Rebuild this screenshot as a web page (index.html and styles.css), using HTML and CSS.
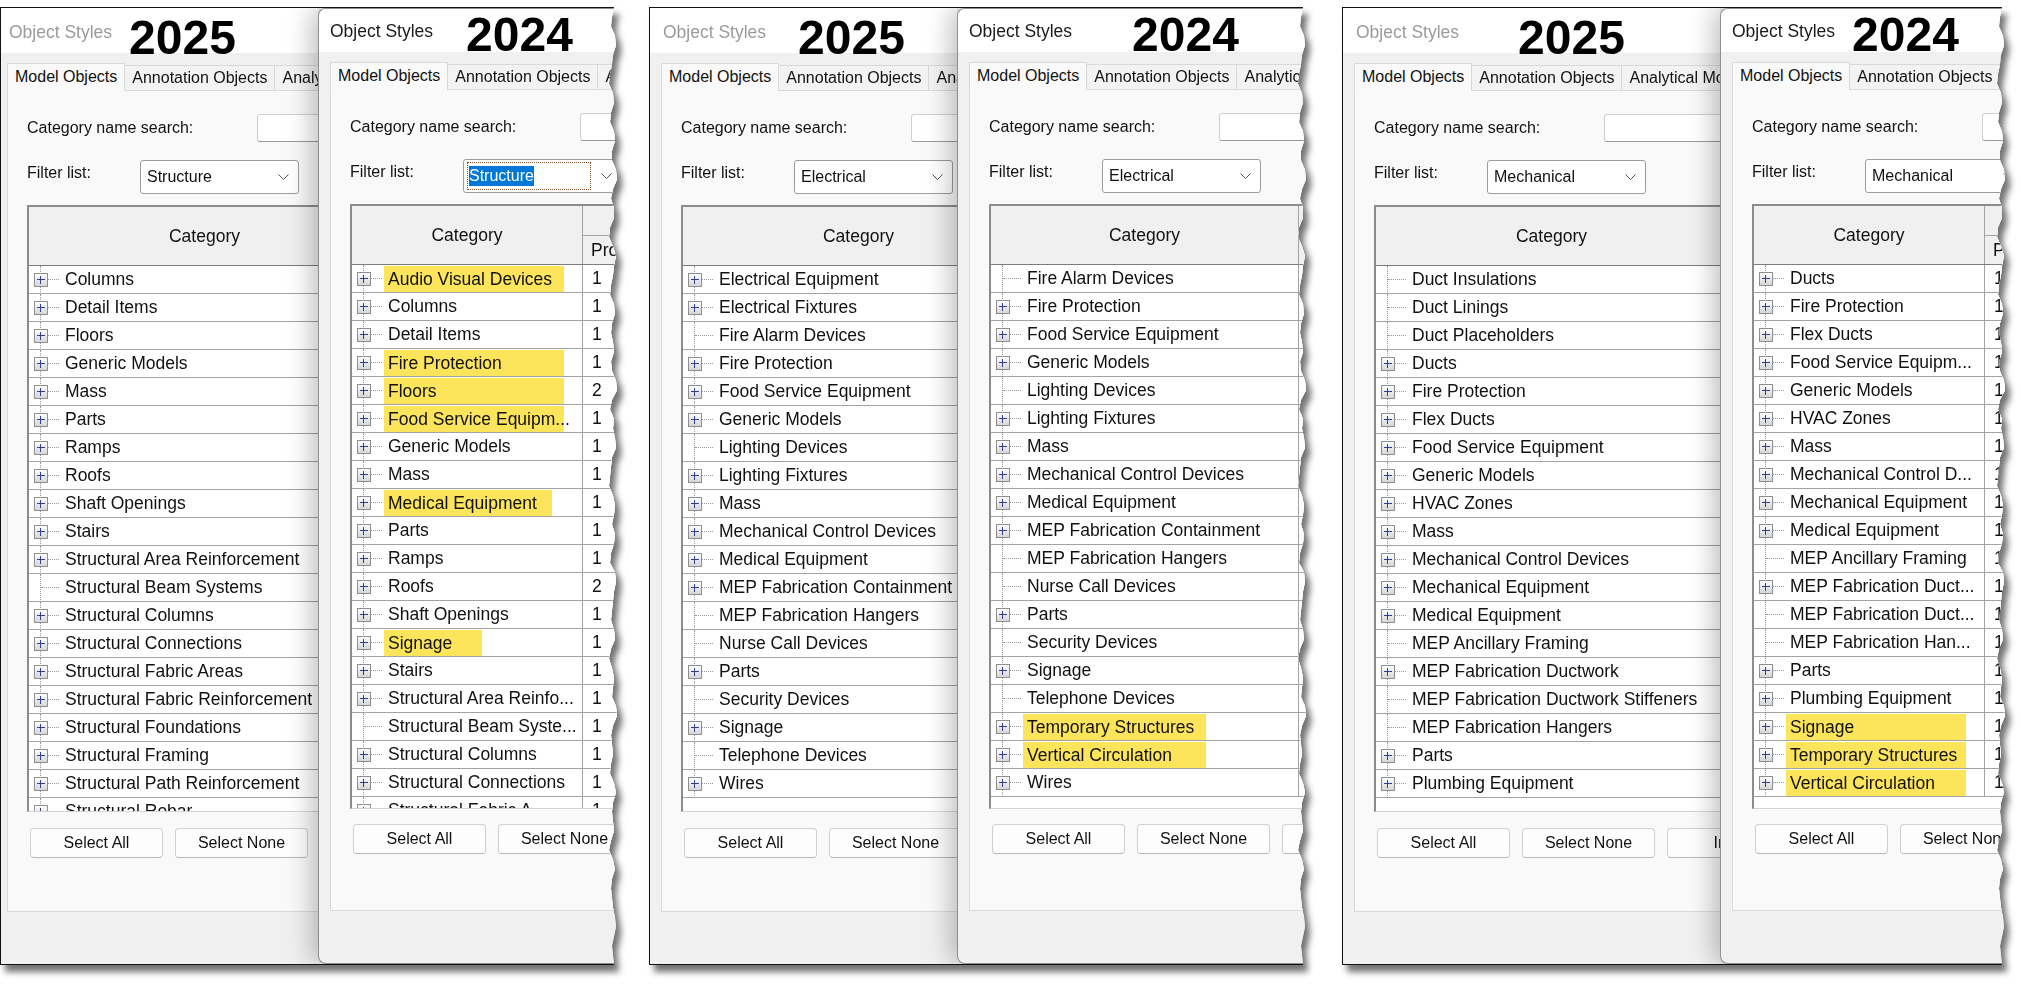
FILE: index.html
```html
<!DOCTYPE html>
<html lang="en">
<head>
    <meta charset="UTF-8">
    <title>Object Styles 2025 vs 2024</title>
    <link rel="stylesheet" href="styles.css">
</head>
<body>
<div class="sheet">

    <!-- Structure -->
    <div class="wrap g1">
        <div class="shot">
            <div class="dlg old">
                <div class="titlebar"><span class="ttl">Object Styles</span><span class="year">2025</span></div>
                <div class="body">
                    <div class="tabs">
                        <div class="tab on">Model Objects</div>
                        <div class="tab">Annotation Objects</div>
                        <div class="tab">Analytical Model Objects</div>
                    </div>
                    <div class="panel">
                        <div class="field"><span class="lbl lbl-search">Category name search:</span><div class="input"></div></div>
                        <div class="field filter-row"><span class="lbl lbl-filter">Filter list:</span>
                            <div class="select"><span>Structure</span><svg class="chev" width="11" height="7" viewBox="0 0 11 7"><polyline points="0.5,0.5 5.5,5.5 10.5,0.5" fill="none" stroke="#555" stroke-width="1"/></svg></div>
                        </div>
                        <div class="grid full">
                            <div class="thead"><div class="th-cat">Category</div><div class="th-rest"><div class="th-top"></div><div class="th-sub">Projection</div></div></div>
                            <div class="row"><div class="cat"><span class="tree"><i class="plus"></i></span><span class="name">Columns</span></div></div>
                            <div class="row"><div class="cat"><span class="tree"><i class="plus"></i></span><span class="name">Detail Items</span></div></div>
                            <div class="row"><div class="cat"><span class="tree"><i class="plus"></i></span><span class="name">Floors</span></div></div>
                            <div class="row"><div class="cat"><span class="tree"><i class="plus"></i></span><span class="name">Generic Models</span></div></div>
                            <div class="row"><div class="cat"><span class="tree"><i class="plus"></i></span><span class="name">Mass</span></div></div>
                            <div class="row"><div class="cat"><span class="tree"><i class="plus"></i></span><span class="name">Parts</span></div></div>
                            <div class="row"><div class="cat"><span class="tree"><i class="plus"></i></span><span class="name">Ramps</span></div></div>
                            <div class="row"><div class="cat"><span class="tree"><i class="plus"></i></span><span class="name">Roofs</span></div></div>
                            <div class="row"><div class="cat"><span class="tree"><i class="plus"></i></span><span class="name">Shaft Openings</span></div></div>
                            <div class="row"><div class="cat"><span class="tree"><i class="plus"></i></span><span class="name">Stairs</span></div></div>
                            <div class="row"><div class="cat"><span class="tree"><i class="plus"></i></span><span class="name">Structural Area Reinforcement</span></div></div>
                            <div class="row"><div class="cat"><span class="tree leaf"></span><span class="name">Structural Beam Systems</span></div></div>
                            <div class="row"><div class="cat"><span class="tree"><i class="plus"></i></span><span class="name">Structural Columns</span></div></div>
                            <div class="row"><div class="cat"><span class="tree"><i class="plus"></i></span><span class="name">Structural Connections</span></div></div>
                            <div class="row"><div class="cat"><span class="tree"><i class="plus"></i></span><span class="name">Structural Fabric Areas</span></div></div>
                            <div class="row"><div class="cat"><span class="tree"><i class="plus"></i></span><span class="name">Structural Fabric Reinforcement</span></div></div>
                            <div class="row"><div class="cat"><span class="tree"><i class="plus"></i></span><span class="name">Structural Foundations</span></div></div>
                            <div class="row"><div class="cat"><span class="tree"><i class="plus"></i></span><span class="name">Structural Framing</span></div></div>
                            <div class="row"><div class="cat"><span class="tree"><i class="plus"></i></span><span class="name">Structural Path Reinforcement</span></div></div>
                            <div class="row"><div class="cat"><span class="tree"><i class="plus"></i></span><span class="name">Structural Rebar</span></div></div>
                        </div>
                        <div class="buttons"><button class="btn">Select All</button><button class="btn">Select None</button><button class="btn">Invert</button></div>
                    </div>
                </div>
            </div>

            <div class="dlg new">
                <div class="titlebar"><span class="ttl">Object Styles</span><span class="year">2024</span></div>
                <div class="body">
                    <div class="tabs">
                        <div class="tab on">Model Objects</div>
                        <div class="tab">Annotation Objects</div>
                        <div class="tab">Analytical Model Objects</div>
                    </div>
                    <div class="panel">
                        <div class="field"><span class="lbl lbl-search">Category name search:</span><div class="input"></div></div>
                        <div class="field filter-row"><span class="lbl lbl-filter">Filter list:</span>
                            <div class="select focus"><span class="ring"><span class="sel-hl">Structure</span></span><svg class="chev" width="11" height="7" viewBox="0 0 11 7"><polyline points="0.5,0.5 5.5,5.5 10.5,0.5" fill="none" stroke="#555" stroke-width="1"/></svg></div>
                        </div>
                        <div class="grid narrow">
                            <div class="thead"><div class="th-cat">Category</div><div class="th-rest"><div class="th-top"></div><div class="th-sub">Projection</div></div></div>
                            <div class="row"><div class="cat"><span class="tree"><i class="plus"></i></span><span class="name hl hl-long">Audio Visual Devices</span></div><div class="val">1</div></div>
                            <div class="row"><div class="cat"><span class="tree"><i class="plus"></i></span><span class="name">Columns</span></div><div class="val">1</div></div>
                            <div class="row"><div class="cat"><span class="tree"><i class="plus"></i></span><span class="name">Detail Items</span></div><div class="val">1</div></div>
                            <div class="row"><div class="cat"><span class="tree"><i class="plus"></i></span><span class="name hl hl-long">Fire Protection</span></div><div class="val">1</div></div>
                            <div class="row"><div class="cat"><span class="tree"><i class="plus"></i></span><span class="name hl hl-long">Floors</span></div><div class="val">2</div></div>
                            <div class="row"><div class="cat"><span class="tree"><i class="plus"></i></span><span class="name hl hl-long">Food Service Equipm...</span></div><div class="val">1</div></div>
                            <div class="row"><div class="cat"><span class="tree"><i class="plus"></i></span><span class="name">Generic Models</span></div><div class="val">1</div></div>
                            <div class="row"><div class="cat"><span class="tree"><i class="plus"></i></span><span class="name">Mass</span></div><div class="val">1</div></div>
                            <div class="row"><div class="cat"><span class="tree"><i class="plus"></i></span><span class="name hl hl-mid">Medical Equipment</span></div><div class="val">1</div></div>
                            <div class="row"><div class="cat"><span class="tree"><i class="plus"></i></span><span class="name">Parts</span></div><div class="val">1</div></div>
                            <div class="row"><div class="cat"><span class="tree"><i class="plus"></i></span><span class="name">Ramps</span></div><div class="val">1</div></div>
                            <div class="row"><div class="cat"><span class="tree"><i class="plus"></i></span><span class="name">Roofs</span></div><div class="val">2</div></div>
                            <div class="row"><div class="cat"><span class="tree"><i class="plus"></i></span><span class="name">Shaft Openings</span></div><div class="val">1</div></div>
                            <div class="row"><div class="cat"><span class="tree"><i class="plus"></i></span><span class="name hl hl-short">Signage</span></div><div class="val">1</div></div>
                            <div class="row"><div class="cat"><span class="tree"><i class="plus"></i></span><span class="name">Stairs</span></div><div class="val">1</div></div>
                            <div class="row"><div class="cat"><span class="tree"><i class="plus"></i></span><span class="name">Structural Area Reinfo...</span></div><div class="val">1</div></div>
                            <div class="row"><div class="cat"><span class="tree leaf"></span><span class="name">Structural Beam Syste...</span></div><div class="val">1</div></div>
                            <div class="row"><div class="cat"><span class="tree"><i class="plus"></i></span><span class="name">Structural Columns</span></div><div class="val">1</div></div>
                            <div class="row"><div class="cat"><span class="tree"><i class="plus"></i></span><span class="name">Structural Connections</span></div><div class="val">1</div></div>
                            <div class="row"><div class="cat"><span class="tree"><i class="plus"></i></span><span class="name">Structural Fabric A...</span></div><div class="val">1</div></div>
                        </div>
                        <div class="buttons"><button class="btn">Select All</button><button class="btn">Select None</button><button class="btn">Invert</button></div>
                    </div>
                </div>
            </div>
        </div>
    </div>

    <!-- Electrical -->
    <div class="wrap g2">
        <div class="shot">
            <div class="dlg old">
                <div class="titlebar"><span class="ttl">Object Styles</span><span class="year">2025</span></div>
                <div class="body">
                    <div class="tabs">
                        <div class="tab on">Model Objects</div>
                        <div class="tab">Annotation Objects</div>
                        <div class="tab">Analytical Model Objects</div>
                    </div>
                    <div class="panel">
                        <div class="field"><span class="lbl lbl-search">Category name search:</span><div class="input"></div></div>
                        <div class="field filter-row"><span class="lbl lbl-filter">Filter list:</span>
                            <div class="select"><span>Electrical</span><svg class="chev" width="11" height="7" viewBox="0 0 11 7"><polyline points="0.5,0.5 5.5,5.5 10.5,0.5" fill="none" stroke="#555" stroke-width="1"/></svg></div>
                        </div>
                        <div class="grid full">
                            <div class="thead"><div class="th-cat">Category</div><div class="th-rest"><div class="th-top"></div><div class="th-sub">Projection</div></div></div>
                            <div class="row"><div class="cat"><span class="tree"><i class="plus"></i></span><span class="name">Electrical Equipment</span></div></div>
                            <div class="row"><div class="cat"><span class="tree"><i class="plus"></i></span><span class="name">Electrical Fixtures</span></div></div>
                            <div class="row"><div class="cat"><span class="tree leaf"></span><span class="name">Fire Alarm Devices</span></div></div>
                            <div class="row"><div class="cat"><span class="tree"><i class="plus"></i></span><span class="name">Fire Protection</span></div></div>
                            <div class="row"><div class="cat"><span class="tree"><i class="plus"></i></span><span class="name">Food Service Equipment</span></div></div>
                            <div class="row"><div class="cat"><span class="tree"><i class="plus"></i></span><span class="name">Generic Models</span></div></div>
                            <div class="row"><div class="cat"><span class="tree leaf"></span><span class="name">Lighting Devices</span></div></div>
                            <div class="row"><div class="cat"><span class="tree"><i class="plus"></i></span><span class="name">Lighting Fixtures</span></div></div>
                            <div class="row"><div class="cat"><span class="tree"><i class="plus"></i></span><span class="name">Mass</span></div></div>
                            <div class="row"><div class="cat"><span class="tree"><i class="plus"></i></span><span class="name">Mechanical Control Devices</span></div></div>
                            <div class="row"><div class="cat"><span class="tree"><i class="plus"></i></span><span class="name">Medical Equipment</span></div></div>
                            <div class="row"><div class="cat"><span class="tree"><i class="plus"></i></span><span class="name">MEP Fabrication Containment</span></div></div>
                            <div class="row"><div class="cat"><span class="tree leaf"></span><span class="name">MEP Fabrication Hangers</span></div></div>
                            <div class="row"><div class="cat"><span class="tree leaf"></span><span class="name">Nurse Call Devices</span></div></div>
                            <div class="row"><div class="cat"><span class="tree"><i class="plus"></i></span><span class="name">Parts</span></div></div>
                            <div class="row"><div class="cat"><span class="tree leaf"></span><span class="name">Security Devices</span></div></div>
                            <div class="row"><div class="cat"><span class="tree"><i class="plus"></i></span><span class="name">Signage</span></div></div>
                            <div class="row"><div class="cat"><span class="tree leaf"></span><span class="name">Telephone Devices</span></div></div>
                            <div class="row"><div class="cat"><span class="tree"><i class="plus"></i></span><span class="name">Wires</span></div></div>
                        </div>
                        <div class="buttons"><button class="btn">Select All</button><button class="btn">Select None</button><button class="btn">Invert</button></div>
                    </div>
                </div>
            </div>

            <div class="dlg new">
                <div class="titlebar"><span class="ttl">Object Styles</span><span class="year">2024</span></div>
                <div class="body">
                    <div class="tabs">
                        <div class="tab on">Model Objects</div>
                        <div class="tab">Annotation Objects</div>
                        <div class="tab">Analytical Model Objects</div>
                    </div>
                    <div class="panel">
                        <div class="field"><span class="lbl lbl-search">Category name search:</span><div class="input"></div></div>
                        <div class="field filter-row"><span class="lbl lbl-filter">Filter list:</span>
                            <div class="select"><span>Electrical</span><svg class="chev" width="11" height="7" viewBox="0 0 11 7"><polyline points="0.5,0.5 5.5,5.5 10.5,0.5" fill="none" stroke="#555" stroke-width="1"/></svg></div>
                        </div>
                        <div class="grid wide">
                            <div class="thead"><div class="th-cat">Category</div><div class="th-rest"><div class="th-top"></div><div class="th-sub">Projection</div></div></div>
                            <div class="row"><div class="cat"><span class="tree leaf"></span><span class="name">Fire Alarm Devices</span></div><div class="val">1</div></div>
                            <div class="row"><div class="cat"><span class="tree"><i class="plus"></i></span><span class="name">Fire Protection</span></div><div class="val">1</div></div>
                            <div class="row"><div class="cat"><span class="tree"><i class="plus"></i></span><span class="name">Food Service Equipment</span></div><div class="val">1</div></div>
                            <div class="row"><div class="cat"><span class="tree"><i class="plus"></i></span><span class="name">Generic Models</span></div><div class="val">1</div></div>
                            <div class="row"><div class="cat"><span class="tree leaf"></span><span class="name">Lighting Devices</span></div><div class="val">1</div></div>
                            <div class="row"><div class="cat"><span class="tree"><i class="plus"></i></span><span class="name">Lighting Fixtures</span></div><div class="val">1</div></div>
                            <div class="row"><div class="cat"><span class="tree"><i class="plus"></i></span><span class="name">Mass</span></div><div class="val">1</div></div>
                            <div class="row"><div class="cat"><span class="tree"><i class="plus"></i></span><span class="name">Mechanical Control Devices</span></div><div class="val">1</div></div>
                            <div class="row"><div class="cat"><span class="tree"><i class="plus"></i></span><span class="name">Medical Equipment</span></div><div class="val">1</div></div>
                            <div class="row"><div class="cat"><span class="tree"><i class="plus"></i></span><span class="name">MEP Fabrication Containment</span></div><div class="val">1</div></div>
                            <div class="row"><div class="cat"><span class="tree leaf"></span><span class="name">MEP Fabrication Hangers</span></div><div class="val">1</div></div>
                            <div class="row"><div class="cat"><span class="tree leaf"></span><span class="name">Nurse Call Devices</span></div><div class="val">1</div></div>
                            <div class="row"><div class="cat"><span class="tree"><i class="plus"></i></span><span class="name">Parts</span></div><div class="val">1</div></div>
                            <div class="row"><div class="cat"><span class="tree leaf"></span><span class="name">Security Devices</span></div><div class="val">1</div></div>
                            <div class="row"><div class="cat"><span class="tree"><i class="plus"></i></span><span class="name">Signage</span></div><div class="val">1</div></div>
                            <div class="row"><div class="cat"><span class="tree leaf"></span><span class="name">Telephone Devices</span></div><div class="val">1</div></div>
                            <div class="row"><div class="cat"><span class="tree"><i class="plus"></i></span><span class="name hl hl-wide">Temporary Structures</span></div><div class="val">1</div></div>
                            <div class="row"><div class="cat"><span class="tree"><i class="plus"></i></span><span class="name hl hl-wide">Vertical Circulation</span></div><div class="val">1</div></div>
                            <div class="row"><div class="cat"><span class="tree"><i class="plus"></i></span><span class="name">Wires</span></div><div class="val">1</div></div>
                        </div>
                        <div class="buttons"><button class="btn">Select All</button><button class="btn">Select None</button><button class="btn">Invert</button></div>
                    </div>
                </div>
            </div>
        </div>
    </div>

    <!-- Mechanical -->
    <div class="wrap g3">
        <div class="shot">
            <div class="dlg old">
                <div class="titlebar"><span class="ttl">Object Styles</span><span class="year">2025</span></div>
                <div class="body">
                    <div class="tabs">
                        <div class="tab on">Model Objects</div>
                        <div class="tab">Annotation Objects</div>
                        <div class="tab">Analytical Model Objects</div>
                    </div>
                    <div class="panel">
                        <div class="field"><span class="lbl lbl-search">Category name search:</span><div class="input"></div></div>
                        <div class="field filter-row"><span class="lbl lbl-filter">Filter list:</span>
                            <div class="select"><span>Mechanical</span><svg class="chev" width="11" height="7" viewBox="0 0 11 7"><polyline points="0.5,0.5 5.5,5.5 10.5,0.5" fill="none" stroke="#555" stroke-width="1"/></svg></div>
                        </div>
                        <div class="grid full">
                            <div class="thead"><div class="th-cat">Category</div><div class="th-rest"><div class="th-top"></div><div class="th-sub">Projection</div></div></div>
                            <div class="row"><div class="cat"><span class="tree leaf"></span><span class="name">Duct Insulations</span></div></div>
                            <div class="row"><div class="cat"><span class="tree leaf"></span><span class="name">Duct Linings</span></div></div>
                            <div class="row"><div class="cat"><span class="tree leaf"></span><span class="name">Duct Placeholders</span></div></div>
                            <div class="row"><div class="cat"><span class="tree"><i class="plus"></i></span><span class="name">Ducts</span></div></div>
                            <div class="row"><div class="cat"><span class="tree"><i class="plus"></i></span><span class="name">Fire Protection</span></div></div>
                            <div class="row"><div class="cat"><span class="tree"><i class="plus"></i></span><span class="name">Flex Ducts</span></div></div>
                            <div class="row"><div class="cat"><span class="tree"><i class="plus"></i></span><span class="name">Food Service Equipment</span></div></div>
                            <div class="row"><div class="cat"><span class="tree"><i class="plus"></i></span><span class="name">Generic Models</span></div></div>
                            <div class="row"><div class="cat"><span class="tree"><i class="plus"></i></span><span class="name">HVAC Zones</span></div></div>
                            <div class="row"><div class="cat"><span class="tree"><i class="plus"></i></span><span class="name">Mass</span></div></div>
                            <div class="row"><div class="cat"><span class="tree"><i class="plus"></i></span><span class="name">Mechanical Control Devices</span></div></div>
                            <div class="row"><div class="cat"><span class="tree"><i class="plus"></i></span><span class="name">Mechanical Equipment</span></div></div>
                            <div class="row"><div class="cat"><span class="tree"><i class="plus"></i></span><span class="name">Medical Equipment</span></div></div>
                            <div class="row"><div class="cat"><span class="tree leaf"></span><span class="name">MEP Ancillary Framing</span></div></div>
                            <div class="row"><div class="cat"><span class="tree"><i class="plus"></i></span><span class="name">MEP Fabrication Ductwork</span></div></div>
                            <div class="row"><div class="cat"><span class="tree leaf"></span><span class="name">MEP Fabrication Ductwork Stiffeners</span></div></div>
                            <div class="row"><div class="cat"><span class="tree leaf"></span><span class="name">MEP Fabrication Hangers</span></div></div>
                            <div class="row"><div class="cat"><span class="tree"><i class="plus"></i></span><span class="name">Parts</span></div></div>
                            <div class="row"><div class="cat"><span class="tree"><i class="plus"></i></span><span class="name">Plumbing Equipment</span></div></div>
                        </div>
                        <div class="buttons"><button class="btn">Select All</button><button class="btn">Select None</button><button class="btn">Invert</button></div>
                    </div>
                </div>
            </div>

            <div class="dlg new">
                <div class="titlebar"><span class="ttl">Object Styles</span><span class="year">2024</span></div>
                <div class="body">
                    <div class="tabs">
                        <div class="tab on">Model Objects</div>
                        <div class="tab">Annotation Objects</div>
                        <div class="tab">Analytical Model Objects</div>
                    </div>
                    <div class="panel">
                        <div class="field"><span class="lbl lbl-search">Category name search:</span><div class="input"></div></div>
                        <div class="field filter-row"><span class="lbl lbl-filter">Filter list:</span>
                            <div class="select"><span>Mechanical</span><svg class="chev" width="11" height="7" viewBox="0 0 11 7"><polyline points="0.5,0.5 5.5,5.5 10.5,0.5" fill="none" stroke="#555" stroke-width="1"/></svg></div>
                        </div>
                        <div class="grid narrow">
                            <div class="thead"><div class="th-cat">Category</div><div class="th-rest"><div class="th-top"></div><div class="th-sub">Projection</div></div></div>
                            <div class="row"><div class="cat"><span class="tree"><i class="plus"></i></span><span class="name">Ducts</span></div><div class="val">1</div></div>
                            <div class="row"><div class="cat"><span class="tree"><i class="plus"></i></span><span class="name">Fire Protection</span></div><div class="val">1</div></div>
                            <div class="row"><div class="cat"><span class="tree"><i class="plus"></i></span><span class="name">Flex Ducts</span></div><div class="val">1</div></div>
                            <div class="row"><div class="cat"><span class="tree"><i class="plus"></i></span><span class="name">Food Service Equipm...</span></div><div class="val">1</div></div>
                            <div class="row"><div class="cat"><span class="tree"><i class="plus"></i></span><span class="name">Generic Models</span></div><div class="val">1</div></div>
                            <div class="row"><div class="cat"><span class="tree"><i class="plus"></i></span><span class="name">HVAC Zones</span></div><div class="val">1</div></div>
                            <div class="row"><div class="cat"><span class="tree"><i class="plus"></i></span><span class="name">Mass</span></div><div class="val">1</div></div>
                            <div class="row"><div class="cat"><span class="tree"><i class="plus"></i></span><span class="name">Mechanical Control D...</span></div><div class="val">1</div></div>
                            <div class="row"><div class="cat"><span class="tree"><i class="plus"></i></span><span class="name">Mechanical Equipment</span></div><div class="val">1</div></div>
                            <div class="row"><div class="cat"><span class="tree"><i class="plus"></i></span><span class="name">Medical Equipment</span></div><div class="val">1</div></div>
                            <div class="row"><div class="cat"><span class="tree leaf"></span><span class="name">MEP Ancillary Framing</span></div><div class="val">1</div></div>
                            <div class="row"><div class="cat"><span class="tree"><i class="plus"></i></span><span class="name">MEP Fabrication Duct...</span></div><div class="val">1</div></div>
                            <div class="row"><div class="cat"><span class="tree leaf"></span><span class="name">MEP Fabrication Duct...</span></div><div class="val">1</div></div>
                            <div class="row"><div class="cat"><span class="tree leaf"></span><span class="name">MEP Fabrication Han...</span></div><div class="val">1</div></div>
                            <div class="row"><div class="cat"><span class="tree"><i class="plus"></i></span><span class="name">Parts</span></div><div class="val">1</div></div>
                            <div class="row"><div class="cat"><span class="tree"><i class="plus"></i></span><span class="name">Plumbing Equipment</span></div><div class="val">1</div></div>
                            <div class="row"><div class="cat"><span class="tree"><i class="plus"></i></span><span class="name hl hl-long">Signage</span></div><div class="val">1</div></div>
                            <div class="row"><div class="cat"><span class="tree"><i class="plus"></i></span><span class="name hl hl-long">Temporary Structures</span></div><div class="val">1</div></div>
                            <div class="row"><div class="cat"><span class="tree"><i class="plus"></i></span><span class="name hl hl-long">Vertical Circulation</span></div><div class="val">1</div></div>
                        </div>
                        <div class="buttons"><button class="btn">Select All</button><button class="btn">Select None</button><button class="btn">Invert</button></div>
                    </div>
                </div>
            </div>
        </div>
    </div>

</div>
</body>
</html>
```
FILE: styles.css
```css
* {
    box-sizing: border-box;
}
body {
    margin: 0;
    width: 2021px;
    height: 985px;
    overflow: hidden;
    background: #fff;
    color: #111;
    font-family: "Liberation Sans", Arial, sans-serif;
}
.sheet {
    display: flex;
    align-items: flex-start;
    padding-top: 7px;
}

/* each screenshot with a torn right edge */
.wrap {
    flex: none;
    filter: drop-shadow(5px 7px 3px rgba(0, 0, 0, 0.55));
}
.wrap.g1 { width: 617px; }
.wrap.g2 { width: 657px; margin-left: 32px; }
.wrap.g3 { width: 663px; margin-left: 36px; }
.shot {
    display: flex;
    height: 958px;
    background: #f0f0f0;
    border: 1px solid #111;
    border-right: none;
    overflow: hidden;
    clip-path: polygon(0 0,
        calc(100% - 3px) 0, calc(100% - 5px) 1%, calc(100% - 6px) 2%, calc(100% - 2px) 3%, calc(100% - 1px) 4%,
        calc(100% - 4px) 5%, calc(100% - 5px) 6%, calc(100% - 7px) 7%, calc(100% - 8px) 8%, calc(100% - 4px) 9%,
        calc(100% - 3px) 10%, calc(100% - 6px) 11%, calc(100% - 7px) 12%, calc(100% - 3px) 13%, calc(100% - 2px) 14%,
        calc(100% - 5px) 15%, calc(100% - 5px) 16%, calc(100% - 1px) 17%, 100% 18%, calc(100% - 4px) 19%,
        calc(100% - 6px) 20%, calc(100% - 3px) 21%, calc(100% - 3px) 22%, calc(100% - 7px) 23%, calc(100% - 8px) 24%,
        calc(100% - 4px) 25%, calc(100% - 1px) 26%, calc(100% - 3px) 27%, calc(100% - 4px) 28%, calc(100% - 6px) 29%,
        calc(100% - 7px) 30%, calc(100% - 3px) 31%, calc(100% - 2px) 32%, calc(100% - 5px) 33%, calc(100% - 6px) 34%,
        calc(100% - 4px) 35%, calc(100% - 3px) 36%, calc(100% - 6px) 37%, calc(100% - 5px) 38%, calc(100% - 1px) 39%,
        100% 40%, calc(100% - 5px) 41%, calc(100% - 7px) 42%, calc(100% - 3px) 43%, calc(100% - 4px) 44%,
        calc(100% - 2px) 45%, calc(100% - 1px) 46%, calc(100% - 5px) 47%, calc(100% - 6px) 48%, calc(100% - 7px) 49%,
        calc(100% - 8px) 50%, calc(100% - 4px) 51%, calc(100% - 2px) 52%, calc(100% - 3px) 53%, calc(100% - 5px) 54%,
        calc(100% - 2px) 55%, calc(100% - 3px) 56%, calc(100% - 6px) 57%, calc(100% - 7px) 58%, calc(100% - 2px) 59%,
        calc(100% - 1px) 60%, calc(100% - 3px) 61%, calc(100% - 4px) 62%, calc(100% - 5px) 63%, calc(100% - 6px) 64%,
        calc(100% - 3px) 65%, calc(100% - 2px) 66%, calc(100% - 6px) 67%, calc(100% - 8px) 68%, calc(100% - 5px) 69%,
        calc(100% - 3px) 70%, calc(100% - 4px) 71%, calc(100% - 5px) 72%, calc(100% - 1px) 73%, 100% 74%,
        calc(100% - 4px) 75%, calc(100% - 6px) 76%, calc(100% - 5px) 77%, calc(100% - 4px) 78%, calc(100% - 6px) 79%,
        calc(100% - 7px) 80%, calc(100% - 3px) 81%, calc(100% - 1px) 82%, calc(100% - 4px) 83%, calc(100% - 5px) 84%,
        calc(100% - 4px) 85%, calc(100% - 3px) 86%, calc(100% - 6px) 87%, calc(100% - 8px) 88%, calc(100% - 4px) 89%,
        calc(100% - 2px) 90%, calc(100% - 5px) 91%, calc(100% - 6px) 92%, calc(100% - 5px) 93%, calc(100% - 4px) 94%,
        calc(100% - 2px) 95%, calc(100% - 1px) 96%, calc(100% - 3px) 97%, calc(100% - 5px) 98%, calc(100% - 4px) 99%,
        calc(100% - 3px) 100%, 0 100%);
}

/* dialogs */
.dlg {
    flex: none;
    overflow: hidden;
    background: #f0f0f0;
}
.dlg.old {
    height: 100%;
}
.g1 .old { width: 322px; margin-left: -5px; }
.g2 .old { width: 307px; }
.g3 .old { width: 377px; }
.dlg.new {
    position: relative;
    z-index: 1;
    width: 420px;
    height: 956px;
    border: 1px solid #8f8f8f;
    border-right: none;
    border-radius: 8px 0 0 8px;
    box-shadow: -6px 0 26px rgba(0, 0, 0, 0.26);
}

.titlebar {
    display: flex;
    align-items: flex-start;
    height: 45px;
    padding-left: 13px;
    background: #fff;
}
.new .titlebar {
    height: 43px;
    padding-left: 11px;
}
.ttl {
    margin-top: 14px;
    font-size: 17.5px;
    line-height: 20px;
    color: #9b9b9b;
    white-space: nowrap;
}
.new .ttl {
    margin-top: 12px;
    color: #1b1b1b;
}
.year {
    margin-top: 6px;
    font-size: 48px;
    line-height: 48px;
    font-weight: bold;
    color: #000;
}
.new .year { margin-top: 2px; }
.g1 .old .year { margin-left: 17px; }
.g2 .old .year { margin-left: 32px; }
.g3 .old .year { margin-left: 59px; }
.g1 .new .year { margin-left: 33px; }
.g2 .new .year { margin-left: 60px; }
.g3 .new .year { margin-left: 17px; }

.body {
    padding: 10px 0 0 11px;
}
.tabs {
    display: flex;
    align-items: flex-end;
    height: 27px;
    white-space: nowrap;
}
.tab {
    flex: none;
    height: 25px;
    padding: 0 7px;
    font-size: 16px;
    line-height: 24px;
    background: #f3f3f3;
    border: 1px solid #d9d9d9;
    border-bottom: none;
    border-left: none;
}
.tab.on {
    position: relative;
    z-index: 1;
    height: 28px;
    margin-bottom: -1px;
    line-height: 25px;
    background: #f9f9f9;
    border-left: 1px solid #d9d9d9;
}

.panel {
    width: 640px;
    height: 822px;
    padding: 23px 0 0 19px;
    background: #f9f9f9;
    border: 1px solid #dadada;
}
.field {
    display: flex;
    align-items: center;
    height: 28px;
}
.filter-row {
    align-items: flex-start;
    height: 34px;
    margin-top: 18px;
}
.lbl {
    flex: none;
    font-size: 16px;
    color: #111;
}
.lbl-search { width: 230px; }
.lbl-filter { width: 113px; padding-top: 4px; }
.input {
    flex: none;
    width: 220px;
    height: 28px;
    background: #fff;
    border: 1px solid #d0d0d0;
    border-bottom-color: #9a9a9a;
    border-radius: 3px;
}
.select {
    flex: none;
    display: flex;
    align-items: center;
    justify-content: space-between;
    width: 159px;
    height: 34px;
    padding: 0 9px 0 6px;
    font-size: 16px;
    background: #fff;
    border: 1px solid #9c9c9c;
    border-radius: 3px;
}
.select.focus {
    padding: 2px 9px 2px 3px;
}
.ring {
    display: flex;
    align-items: center;
    align-self: stretch;
    flex: 1;
    margin-right: 10px;
    padding-left: 1px;
    border: 1px dotted #7b4f1f;
}
.sel-hl {
    padding: 1px 0;
    color: #fff;
    background: #0078d7;
}
.chev { flex: none; }

/* category tree table */
.grid {
    width: 600px;
    height: 607px;
    margin-top: 11px;
    overflow: hidden;
    background: #fff;
    border-top: 2px solid #8c8c8c;
    border-left: 2px solid #8c8c8c;
    border-bottom: 1px solid #d4d4d4;
}
.new .grid { height: 605px; }
.thead {
    display: flex;
    height: 59px;
    background: #f0f0f0;
    border-bottom: 1px solid #7d7d7d;
}
.th-cat {
    flex: none;
    display: flex;
    align-items: center;
    justify-content: center;
    font-size: 17.5px;
    border-right: 1px solid #a3a3a3;
}
.th-rest {
    flex: 1;
    display: flex;
    flex-direction: column;
}
.th-top {
    height: 30px;
    border-bottom: 1px solid #a3a3a3;
}
.th-sub {
    flex: 1;
    display: flex;
    align-items: center;
    padding-left: 8px;
    font-size: 17.5px;
}
.full .th-cat, .full .cat { width: 352px; }
.narrow .th-cat, .narrow .cat { width: 231px; }
.wide .th-cat, .wide .cat { width: 308px; }

.row {
    display: flex;
    height: 28px;
    border-bottom: 1px solid #a3a3a3;
}
.cat {
    flex: none;
    display: flex;
    align-items: center;
    height: 100%;
    border-right: 1px solid #a3a3a3;
}
.tree {
    flex: none;
    position: relative;
    width: 36px;
    align-self: stretch;
}
.tree::before {
    content: "";
    position: absolute;
    left: 11px;
    top: 0;
    bottom: -1px;
    border-left: 1px dotted #9a9a9a;
}
.tree::after {
    content: "";
    position: absolute;
    left: 19px;
    top: 13px;
    width: 11px;
    border-top: 1px dotted #9a9a9a;
}
.tree.leaf::after {
    left: 12px;
    width: 18px;
}
.plus {
    position: absolute;
    z-index: 1;
    left: 5px;
    top: 7px;
    width: 14px;
    height: 14px;
    background: linear-gradient(#fdfdfd, #d6d6d6);
    border: 1px solid #8e8e8e;
}
.plus::before {
    content: "";
    position: absolute;
    left: 2px;
    right: 2px;
    top: 5px;
    height: 1px;
    background: #2f3f8f;
}
.plus::after {
    content: "";
    position: absolute;
    top: 2px;
    bottom: 2px;
    left: 5px;
    width: 1px;
    background: #2f3f8f;
}
.name {
    font-size: 17.5px;
    white-space: nowrap;
}
.hl {
    display: flex;
    align-items: center;
    align-self: stretch;
    margin: 1px 0 0 -4px;
    padding-left: 4px;
    background: #fce55b;
}
.hl-long { width: 180px; }
.hl-mid { width: 168px; }
.hl-short { width: 98px; }
.hl-wide { width: 183px; }
.val {
    display: flex;
    align-items: center;
    padding-left: 9px;
    font-size: 17.5px;
}

.buttons {
    display: flex;
    gap: 12px;
    margin: 16px 0 0 3px;
}
.new .buttons { margin-top: 15px; }
.btn {
    flex: none;
    width: 133px;
    height: 30px;
    padding: 0;
    font: 16px "Liberation Sans", Arial, sans-serif;
    color: #111;
    background: #fdfdfd;
    border: 1px solid #d0d0d0;
    border-bottom-color: #b8b8b8;
    border-radius: 4px;
}
```
